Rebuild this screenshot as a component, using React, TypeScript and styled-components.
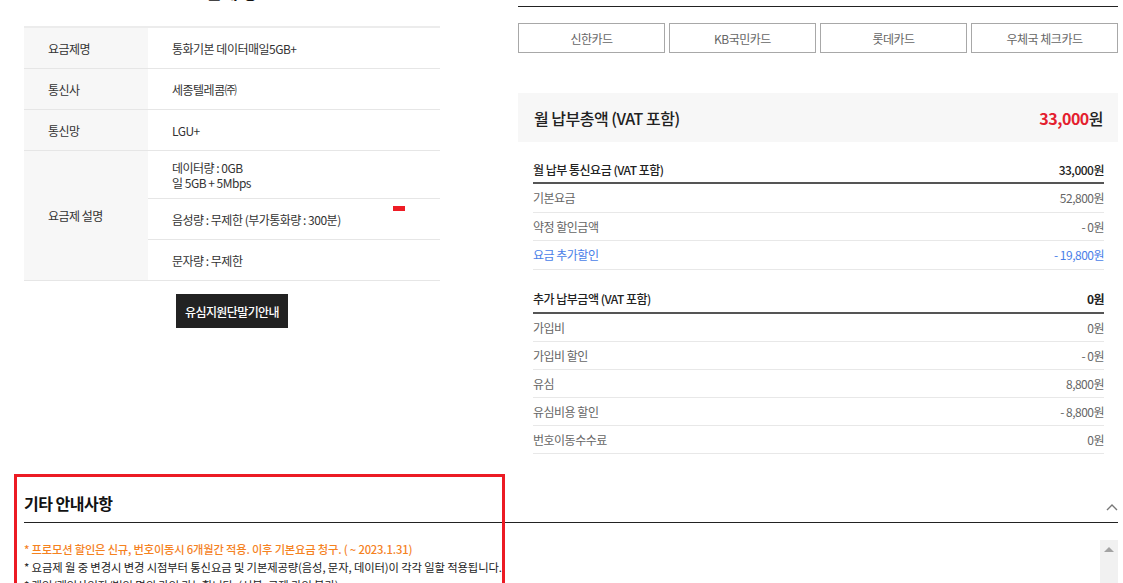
import React from "react";
import styled, {createGlobalStyle} from "styled-components";

const GlobalStyle = createGlobalStyle`
  html, body {
    margin: 0;
    padding: 0;
    background: #fff;
    overflow: hidden;
  }

  body {
    font-family: "Noto Sans CJK KR", "Noto Sans", sans-serif;
    color: #333;
  }
`

const Page = styled.div`
  width: 1123px;
  height: 583px;
  overflow: hidden;
  padding-left: 24px;
  box-sizing: border-box;
`

const TopGrid = styled.div`
  display: grid;
  grid-template-columns: 416px 600px;
  column-gap: 78px;
  align-items: start;
`

const LeftColumn = styled.div`
  display: flex;
  flex-direction: column;
  align-items: center;
`

const Title = styled.h2`
  margin: -18px 0 24px;
  height: 20px;
  line-height: 20px;
  font-size: 17px;
  font-weight: 700;
  color: #111;
`

const PlanTable = styled.table`
  width: 100%;
  border-collapse: collapse;
  border-top: 2px solid #ececec;
  font-size: 12px;
  letter-spacing: -0.5px;

  th, td {
    border-bottom: 1px solid #e6e6e6;
    text-align: left;
    font-weight: 400;
    color: #333;
    padding: 0;
  }

  th {
    width: 124px;
    background: #f7f7f7;
    padding-left: 24px;
    box-sizing: border-box;
  }

  td {
    padding-left: 24px;
    height: 40px;
  }
`

const TallCell = styled.td`
  && {
    height: 47px;
    line-height: 15px;
  }
`

const Cell = styled.td`
  position: relative;
`

const RedMark = styled.span`
  position: absolute;
  left: 245px;
  top: 7px;
  width: 12px;
  height: 5px;
  background: #ee1c25;
`

const DarkButton = styled.button`
  margin-top: 13px;
  width: 112px;
  height: 34px;
  border: 0;
  background: #222;
  color: #fff;
  font-family: inherit;
  font-size: 12px;
  font-weight: 500;
  letter-spacing: -0.6px;
  cursor: pointer;
`

const RightColumn = styled.div`
  display: flex;
  flex-direction: column;
`

const TopRule = styled.div`
  height: 6px;
  border-bottom: 1px solid #222;
`

const CardGrid = styled.div`
  margin-top: 16px;
  display: grid;
  grid-template-columns: repeat(4, 1fr);
  gap: 4px;
`

const CardButton = styled.button`
  height: 30px;
  border: 1px solid #a8a8a8;
  background: #fff;
  color: #666;
  font-family: inherit;
  font-size: 12px;
  letter-spacing: -0.5px;
`

const TotalBox = styled.div`
  margin-top: 40px;
  height: 49px;
  background: #f7f7f7;
  display: flex;
  align-items: center;
  justify-content: space-between;
  padding: 0 15px 0 16px;
  font-size: 16px;
  font-weight: 500;
  color: #222;
  letter-spacing: -0.5px;
`

const TotalPrice = styled.span`
  font-weight: 700;

  em {
    font-style: normal;
    color: #e4202e;
  }

  span {
    font-weight: 500;
  }
`

const FeeList = styled.div`
  margin: 14px 14px 0 15px;
  display: flex;
  flex-direction: column;
`

const FeeGroup = styled.div`
  display: flex;
  flex-direction: column;

  & + & {
    margin-top: 16px;
  }
`

const FeeRow: any = styled.div`
  display: flex;
  justify-content: space-between;
  align-items: center;
  height: ${({head, tall}: any) => head ? '26px' : tall ? '27.5px' : '27px'};
  border-bottom: ${({head}: any) => head ? '2px solid #555' : '1px solid #e8e8e8'};
  font-size: 12px;
  letter-spacing: -0.5px;
  font-weight: ${({head}: any) => head ? 500 : 400};
  color: ${({head, blue}: any) => blue ? '#4a7ee8' : head ? '#222' : '#666'};
`

const BottomSection = styled.section`
  position: relative;
  margin-top: 20px;
  margin-right: 5px;
`

const Highlight = styled.div`
  position: absolute;
  left: -10px;
  top: 0;
  width: 491px;
  height: 200px;
  border: 3px solid #ec1b24;
  box-sizing: border-box;
  pointer-events: none;
`

const SectionHead = styled.div`
  display: flex;
  justify-content: space-between;
  align-items: center;
  padding: 19px 0 9px;
  border-bottom: 1px solid #222;

  h3 {
    margin: 0;
    height: 20px;
    line-height: 20px;
    font-size: 16px;
    font-weight: 700;
    color: #111;
    letter-spacing: -0.5px;
  }

  svg {
    margin-top: 8px;
  }
`

const NoticeBox = styled.div`
  margin-top: 17px;
  display: flex;
  height: 80px;
`

const NoticeText = styled.div`
  flex: 1;
  font-size: 11.3px;
  line-height: 18px;
  color: #222;
  letter-spacing: -0.1px;

  p {
    margin: 0;
    white-space: nowrap;
  }
`

const Orange = styled.p`
  && {
    color: #f5821f;
    font-weight: 500;
    letter-spacing: -0.2px;
  }
`

const ScrollTrack = styled.div`
  width: 18px;
  margin-top: 0;
  background: #f1f1f1;
  display: flex;
  justify-content: center;
  padding-top: 7px;
  box-sizing: border-box;
`

const ArrowUp = styled.span`
  width: 0;
  height: 0;
  border-left: 5px solid transparent;
  border-right: 5px solid transparent;
  border-bottom: 5px solid #a3a3a3;
`

const planRows = [
    {label: '요금제명', value: '통화기본 데이터매일5GB+'},
    {label: '통신사', value: '세종텔레콤㈜'},
    {label: '통신망', value: 'LGU+'},
];

const cards = ['신한카드', 'KB국민카드', '롯데카드', '우체국 체크카드'];

const monthlyFees = [
    {label: '기본요금', value: '52,800원'},
    {label: '약정 할인금액', value: '- 0원'},
    {label: '요금 추가할인', value: '- 19,800원', blue: true},
];

const extraFees = [
    {label: '가입비', value: '0원'},
    {label: '가입비 할인', value: '- 0원'},
    {label: '유심', value: '8,800원'},
    {label: '유심비용 할인', value: '- 8,800원'},
    {label: '번호이동수수료', value: '0원'},
];

const App: React.FC = () => {
    return (
        <>
            <GlobalStyle/>
            <Page>
                <TopGrid>
                    <LeftColumn>
                        <Title>요금제 정보</Title>
                        <PlanTable>
                            <tbody>
                            {planRows.map(r =>
                                <tr key={r.label}>
                                    <th>{r.label}</th>
                                    <td>{r.value}</td>
                                </tr>
                            )}
                            <tr>
                                <th rowSpan={3}>요금제 설명</th>
                                <TallCell>데이터량 : 0GB<br/>일 5GB + 5Mbps</TallCell>
                            </tr>
                            <tr>
                                <Cell>
                                    <RedMark/>
                                    음성량 : 무제한 (부가통화량 : 300분)
                                </Cell>
                            </tr>
                            <tr>
                                <td>문자량 : 무제한</td>
                            </tr>
                            </tbody>
                        </PlanTable>
                        <DarkButton>유심지원단말기안내</DarkButton>
                    </LeftColumn>

                    <RightColumn>
                        <TopRule/>
                        <CardGrid>
                            {cards.map(c => <CardButton key={c}>{c}</CardButton>)}
                        </CardGrid>
                        <TotalBox>
                            <span>월 납부총액 (VAT 포함)</span>
                            <TotalPrice><em>33,000</em><span>원</span></TotalPrice>
                        </TotalBox>
                        <FeeList>
                            <FeeGroup>
                                <FeeRow head>
                                    <span>월 납부 통신요금 (VAT 포함)</span>
                                    <span>33,000원</span>
                                </FeeRow>
                                {monthlyFees.map(f =>
                                    <FeeRow key={f.label} blue={f.blue} tall>
                                        <span>{f.label}</span>
                                        <span>{f.value}</span>
                                    </FeeRow>
                                )}
                            </FeeGroup>
                            <FeeGroup>
                                <FeeRow head>
                                    <span>추가 납부금액 (VAT 포함)</span>
                                    <b>0원</b>
                                </FeeRow>
                                {extraFees.map(f =>
                                    <FeeRow key={f.label}>
                                        <span>{f.label}</span>
                                        <span>{f.value}</span>
                                    </FeeRow>
                                )}
                            </FeeGroup>
                        </FeeList>
                    </RightColumn>
                </TopGrid>

                <BottomSection>
                    <Highlight/>
                    <SectionHead>
                        <h3>기타 안내사항</h3>
                        <svg width="12" height="8" viewBox="0 0 12 8">
                            <path d="M1 7 L6 2 L11 7" fill="none" stroke="#777" strokeWidth="1.4"/>
                        </svg>
                    </SectionHead>
                    <NoticeBox>
                        <NoticeText>
                            <Orange>* 프로모션 할인은 신규, 번호이동시 6개월간 적용. 이후 기본요금 청구. ( ~ 2023.1.31)</Orange>
                            <p>* 요금제 월 중 변경시 변경 시점부터 통신요금 및 기본제공량(음성, 문자, 데이터)이 각각 일할 적용됩니다.</p>
                            <p>* 개인/개인사업자/법인 명의 가입 가능합니다. (선불, 공제 가입 불가)</p>
                        </NoticeText>
                        <ScrollTrack>
                            <ArrowUp/>
                        </ScrollTrack>
                    </NoticeBox>
                </BottomSection>
            </Page>
        </>
    )
}

export default App;
